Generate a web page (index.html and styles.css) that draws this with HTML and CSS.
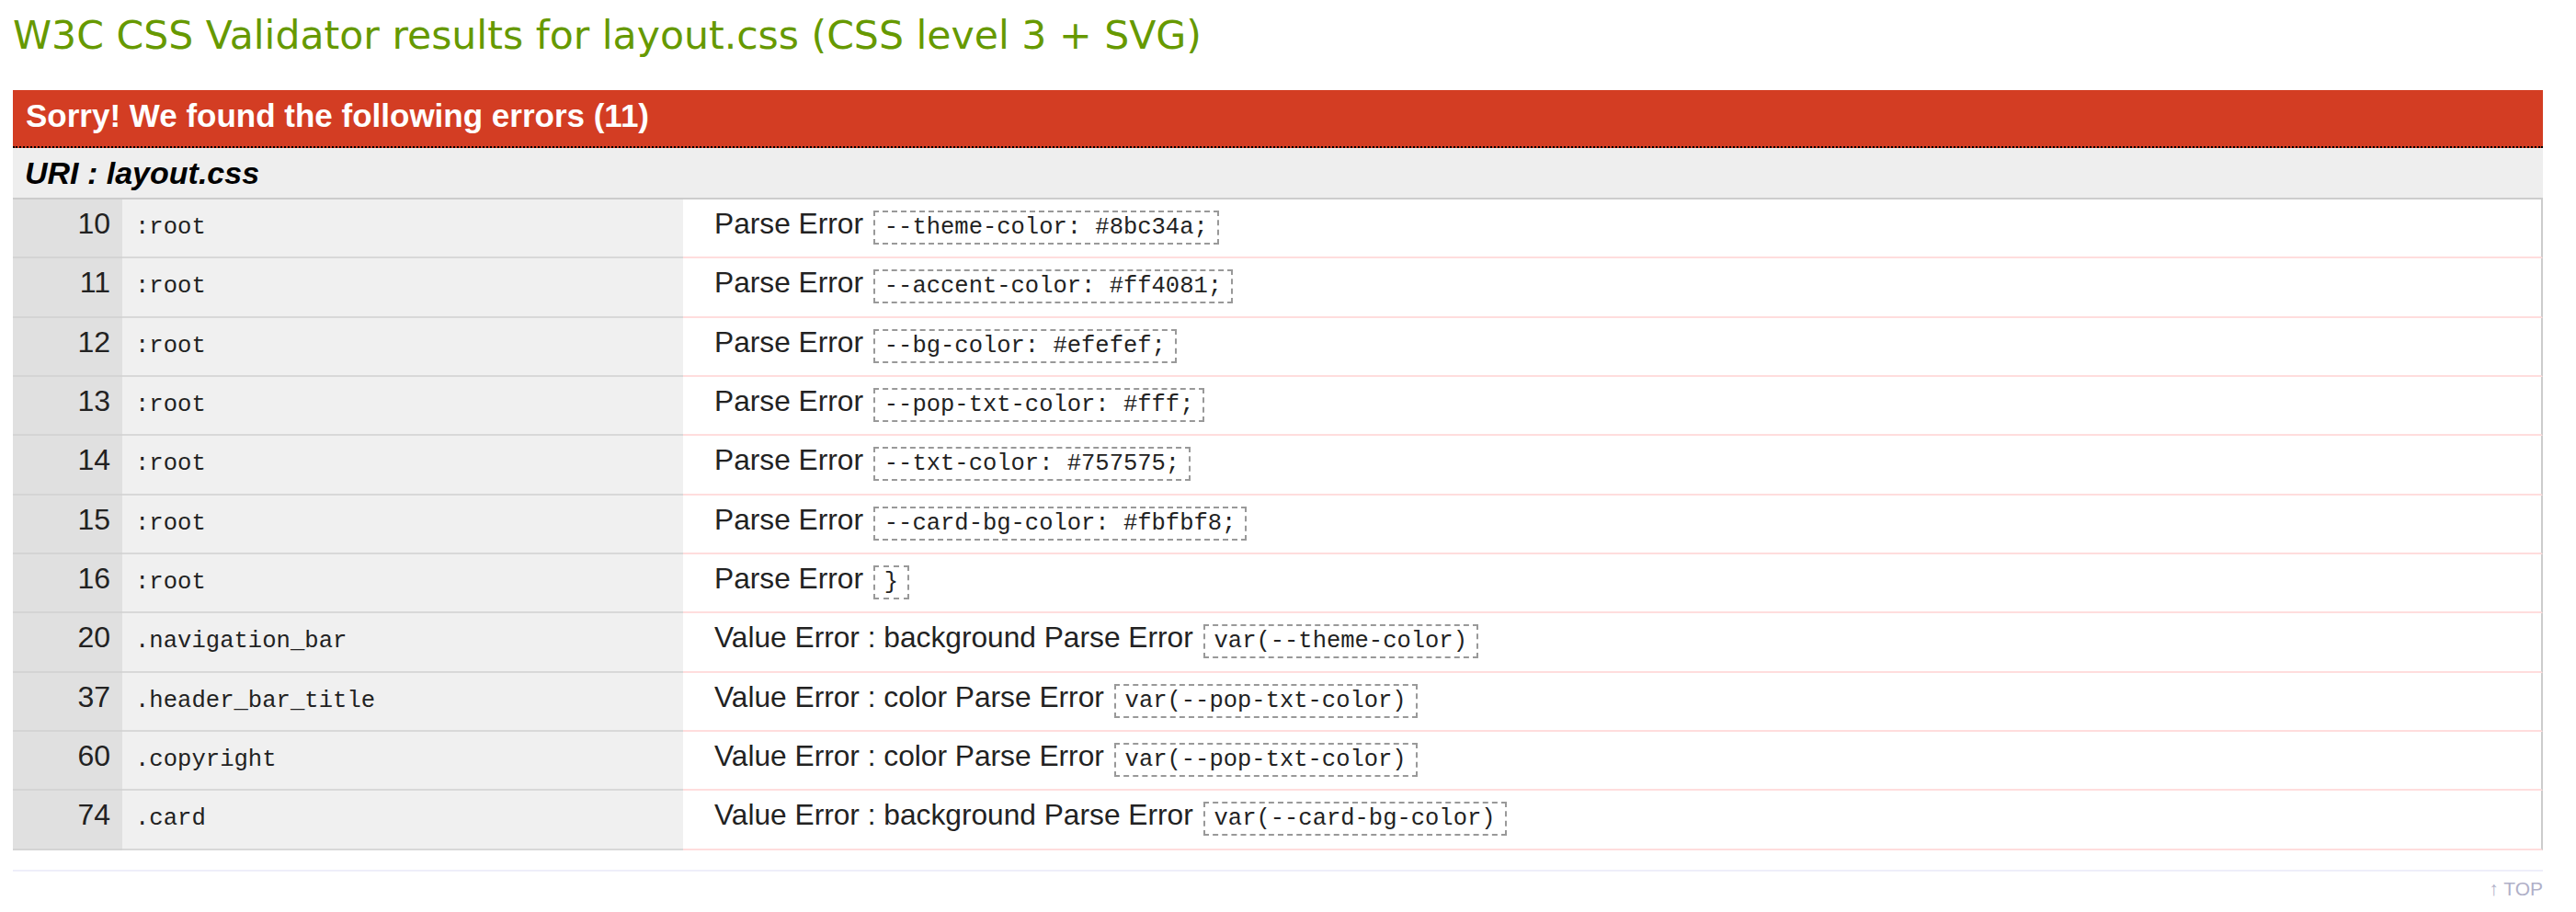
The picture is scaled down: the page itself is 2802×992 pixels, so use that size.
FILE: index.html
```html
<!DOCTYPE html>
<html lang="en">
<head>
<meta charset="utf-8">
<title>W3C CSS Validator results for layout.css</title>
<link rel="stylesheet" href="styles.css">
</head>
<body>
<div class="page">
  <h1 class="title">W3C CSS Validator results for layout.css (CSS level 3 + SVG)</h1>
  <div class="errors">
    <h2 class="errors-head">Sorry! We found the following errors (11)</h2>
    <h3 class="uri">URI : layout.css</h3>
    <table class="err-table">
      <tr><td class="num">10</td><td class="sel">:root</td><td class="msg">Parse Error <span class="code">--theme-color: #8bc34a;</span></td></tr>
      <tr><td class="num">11</td><td class="sel">:root</td><td class="msg">Parse Error <span class="code">--accent-color: #ff4081;</span></td></tr>
      <tr><td class="num">12</td><td class="sel">:root</td><td class="msg">Parse Error <span class="code">--bg-color: #efefef;</span></td></tr>
      <tr><td class="num">13</td><td class="sel">:root</td><td class="msg">Parse Error <span class="code">--pop-txt-color: #fff;</span></td></tr>
      <tr><td class="num">14</td><td class="sel">:root</td><td class="msg">Parse Error <span class="code">--txt-color: #757575;</span></td></tr>
      <tr><td class="num">15</td><td class="sel">:root</td><td class="msg">Parse Error <span class="code">--card-bg-color: #fbfbf8;</span></td></tr>
      <tr><td class="num">16</td><td class="sel">:root</td><td class="msg">Parse Error <span class="code">}</span></td></tr>
      <tr><td class="num">20</td><td class="sel">.navigation_bar</td><td class="msg">Value Error : background Parse Error <span class="code">var(--theme-color)</span></td></tr>
      <tr><td class="num">37</td><td class="sel">.header_bar_title</td><td class="msg">Value Error : color Parse Error <span class="code">var(--pop-txt-color)</span></td></tr>
      <tr><td class="num">60</td><td class="sel">.copyright</td><td class="msg">Value Error : color Parse Error <span class="code">var(--pop-txt-color)</span></td></tr>
      <tr><td class="num">74</td><td class="sel">.card</td><td class="msg">Value Error : background Parse Error <span class="code">var(--card-bg-color)</span></td></tr>
    </table>
  </div>
  <div class="footer-line"></div>
  <div class="top-link">&#8593; TOP</div>
</div>
</body>
</html>
```

FILE: styles.css
```css
html, body {
  margin: 0;
  padding: 0;
  background: #ffffff;
}

body {
  font-family: "Liberation Sans", Arial, Helvetica, sans-serif;
  color: #222222;
}

.page {
  width: 2752px;
  margin-left: 14px;
}

.title {
  margin: 0;
  height: 98px;
  box-sizing: border-box;
  padding-top: 8px;
  line-height: 60px;
  font-family: "DejaVu Sans", Verdana, sans-serif;
  font-weight: normal;
  font-size: 42.6px;
  color: #669900;
  white-space: nowrap;
}

.errors-head {
  margin: 0;
  height: 63px;
  box-sizing: border-box;
  padding-left: 14px;
  background: #d33d23;
  border-bottom: 2px dotted #000000;
  color: #ffffff;
  font-size: 35px;
  font-weight: bold;
  line-height: 56px;
  white-space: nowrap;
}

.uri {
  margin: 0;
  height: 54px;
  box-sizing: border-box;
  padding-left: 13px;
  padding-top: 2px;
  background: #eeeeee;
  color: #000000;
  font-size: 34px;
  font-weight: bold;
  font-style: italic;
  line-height: 50px;
  white-space: nowrap;
}

.err-table {
  width: 2752px;
  border-collapse: separate;
  border-spacing: 0;
  border-top: 2px solid #cccccc;
  table-layout: fixed;
}

.err-table td {
  height: 64.35px;
  box-sizing: border-box;
  padding: 0;
  vertical-align: baseline;
  line-height: 40px;
  white-space: nowrap;
}

.num {
  width: 119px;
  padding-right: 13px !important;
  text-align: right;
  background: #e0e0e0;
  border-bottom: 2px solid #d4d4d4;
  font-size: 32px;
}

.sel {
  width: 610px;
  padding-left: 14px !important;
  background: #f0f0f0;
  border-bottom: 2px solid #d8d8d8;
  font-family: "Liberation Mono", "Courier New", monospace;
  font-size: 25.6px;
}

.msg {
  padding-left: 34px !important;
  padding-top: 6px !important;
  background: #ffffff;
  border-bottom: 2px solid #ffdddd;
  border-right: 2px solid #cccccc;
  font-size: 31.7px;
}

.code {
  display: inline-block;
  margin-left: 2px;
  padding: 0 10px;
  border: 2px dashed #999999;
  font-family: "Liberation Mono", "Courier New", monospace;
  font-size: 25.5px;
  line-height: 33px;
}

.footer-line {
  margin-top: 21px;
  height: 2px;
  background: #eeeefa;
}

.top-link {
  margin-top: 4px;
  text-align: right;
  font-size: 21px;
  line-height: 30px;
  color: #b0b0c8;
}
```
